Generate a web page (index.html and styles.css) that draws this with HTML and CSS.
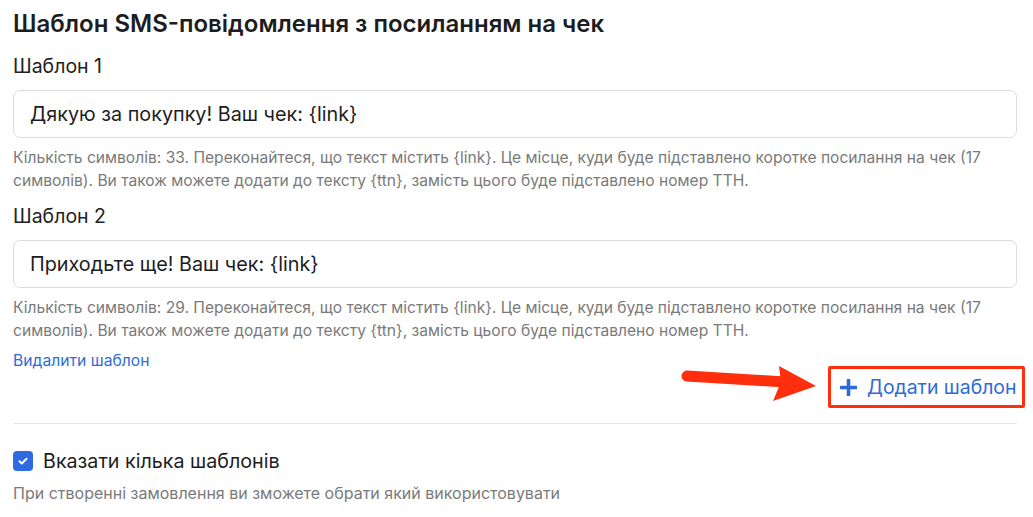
FILE: index.html
```html
<!DOCTYPE html>
<html lang="uk">
<head>
<meta charset="UTF-8" />
<meta name="viewport" content="width=device-width, initial-scale=1" />
<title>Шаблон SMS</title>
<link rel="stylesheet" href="styles.css">
</head>
<body>

<div class="settings">
  <h2 class="title">Шаблон SMS-повідомлення з посиланням на чек</h2>

  <div class="template">
    <label class="label">Шаблон 1</label>
    <input class="field" type="text" value="Дякую за покупку! Ваш чек: {link}">
    <p class="hint">Кількість символів: 33. Переконайтеся, що текст містить {link}. Це місце, куди буде підставлено коротке посилання на чек (17 символів). Ви також можете додати до тексту {ttn}, замість цього буде підставлено номер ТТН.</p>
  </div>

  <div class="template second">
    <label class="label">Шаблон 2</label>
    <input class="field" type="text" value="Приходьте ще! Ваш чек: {link}">
    <p class="hint">Кількість символів: 29. Переконайтеся, що текст містить {link}. Це місце, куди буде підставлено коротке посилання на чек (17 символів). Ви також можете додати до тексту {ttn}, замість цього буде підставлено номер ТТН.</p>
    <a class="remove" href="#">Видалити шаблон</a>
  </div>

  <div class="add-row">
    <svg class="arrow" width="142" height="40" viewBox="0 0 142 40">
      <line x1="6" y1="10" x2="104" y2="16" stroke="#ff2e0c" stroke-width="11" stroke-linecap="round"/>
      <polygon points="98,0 135,20 92,35 100,16" fill="#ff2e0c"/>
    </svg>
    <button class="add-btn">
      <svg width="17" height="17" viewBox="0 0 17 17">
        <path d="M8.5 1.2v14.6M1.2 8.5h14.6" stroke="#2f6ad9" stroke-width="3.6" stroke-linecap="round"/>
      </svg>
      Додати шаблон
    </button>
  </div>

  <hr class="divider">

  <label class="check">
    <span class="box">
      <svg width="12" height="12" viewBox="0 0 12 12">
        <path d="M2.5 6.3l2.3 2.2 4.7-4.8" fill="none" stroke="#fff" stroke-width="2" stroke-linecap="round" stroke-linejoin="round"/>
      </svg>
    </span>
    Вказати кілька шаблонів
  </label>
  <p class="hint note">При створенні замовлення ви зможете обрати який використовувати</p>
</div>

</body>
</html>
```

FILE: styles.css
```css
body, html {
  margin: 0; padding: 0;
  background: #fff;
  color: #1d1d1f;
  font-family: Inter, "Noto Sans", sans-serif;
}

.settings {
  padding: 0 16px 0 13px;
  display: flex;
  flex-direction: column;
}

.title {
  margin: 10px 0 0;
  font-size: 24px;
  line-height: 28px;
  font-weight: 600;
  color: #1d1d1f;
}

.template {
  display: flex;
  flex-direction: column;
  margin-top: 16px;
}

.template.second {
  margin-top: 12px;
}

.label {
  font-size: 19.5px;
  line-height: 24px;
  color: #222;
}

.field {
  margin-top: 12px;
  height: 48px;
  box-sizing: border-box;
  border: 1px solid #dcdcdc;
  border-radius: 7px;
  padding: 0 16px;
  font-family: inherit;
  font-size: 19.8px;
  color: #1d1d1f;
  outline: none;
}

.hint {
  margin: 8px 0 0;
  font-size: 15.6px;
  line-height: 23px;
  color: #7a7a7a;
}

.remove {
  margin-top: 9px;
  font-size: 15.7px;
  line-height: 20px;
  color: #2f6ad9;
  text-decoration: none;
  align-self: flex-start;
}

.add-row {
  display: flex;
  justify-content: flex-end;
  align-items: flex-start;
  gap: 5px;
  margin-top: -5px;
  margin-right: -8px;
}

.add-btn {
  display: flex;
  align-items: center;
  gap: 10px;
  height: 42px;
  width: 197px;
  box-sizing: border-box;
  padding: 0 0 0 9px;
  border: 3px solid #ff2e0c;
  border-radius: 2px;
  background: #fff;
  color: #2f6ad9;
  font-family: inherit;
  font-size: 19.4px;
  white-space: nowrap;
  cursor: pointer;
}

.divider {
  margin: 15px 0 0;
  border: none;
  border-top: 1px solid #e6e6e6;
}

.check {
  margin-top: 24px;
  display: flex;
  align-items: center;
  gap: 10px;
  font-size: 19.7px;
  line-height: 26px;
  color: #1d1d1f;
}

.box {
  width: 20px;
  height: 20px;
  border-radius: 4px;
  background: #2f6ae0;
  display: flex;
  align-items: center;
  justify-content: center;
}

.note {
  margin-top: 9px;
  font-size: 16px;
  line-height: 20px;
}
```
